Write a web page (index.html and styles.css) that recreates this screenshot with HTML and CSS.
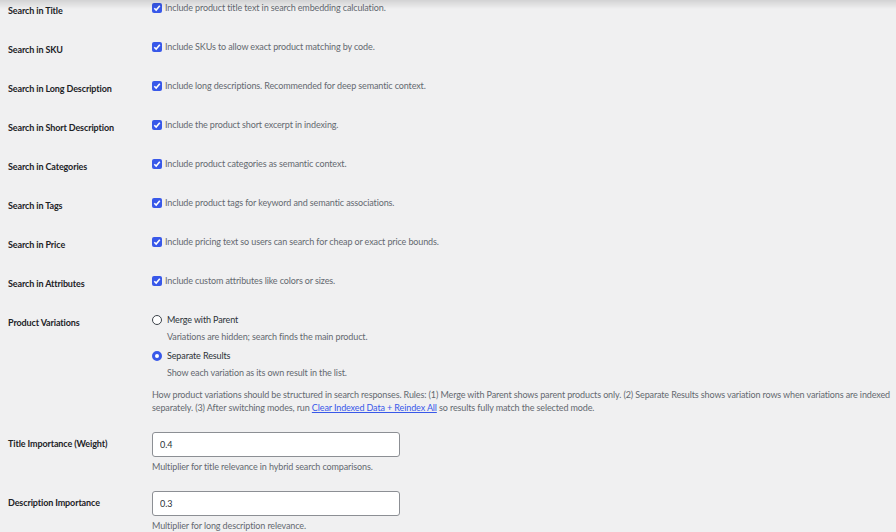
FILE: index.html
```html
<!DOCTYPE html>
<html lang="en">

<head>
    <meta charset="UTF-8">
    <meta name="viewport" content="width=device-width, initial-scale=1.0">
    <title>Search Settings</title>
    <link rel="stylesheet" href="styles.css">
</head>

<body>
    <div class="top-shadow"></div>

    <div class="settings">
        <div class="row">
            <div class="row-label">Search in Title</div>
            <div class="field">
                <label class="check"><span class="box"><svg viewBox="0 0 10 10"><polyline points="2.3,5.2 4.2,7.1 7.8,2.8" /></svg></span>Include product title text in search embedding calculation.</label>
            </div>
        </div>

        <div class="row">
            <div class="row-label">Search in SKU</div>
            <div class="field">
                <label class="check"><span class="box"><svg viewBox="0 0 10 10"><polyline points="2.3,5.2 4.2,7.1 7.8,2.8" /></svg></span>Include SKUs to allow exact product matching by code.</label>
            </div>
        </div>

        <div class="row">
            <div class="row-label">Search in Long Description</div>
            <div class="field">
                <label class="check"><span class="box"><svg viewBox="0 0 10 10"><polyline points="2.3,5.2 4.2,7.1 7.8,2.8" /></svg></span>Include long descriptions. Recommended for deep semantic context.</label>
            </div>
        </div>

        <div class="row">
            <div class="row-label">Search in Short Description</div>
            <div class="field">
                <label class="check"><span class="box"><svg viewBox="0 0 10 10"><polyline points="2.3,5.2 4.2,7.1 7.8,2.8" /></svg></span>Include the product short excerpt in indexing.</label>
            </div>
        </div>

        <div class="row">
            <div class="row-label">Search in Categories</div>
            <div class="field">
                <label class="check"><span class="box"><svg viewBox="0 0 10 10"><polyline points="2.3,5.2 4.2,7.1 7.8,2.8" /></svg></span>Include product categories as semantic context.</label>
            </div>
        </div>

        <div class="row">
            <div class="row-label">Search in Tags</div>
            <div class="field">
                <label class="check"><span class="box"><svg viewBox="0 0 10 10"><polyline points="2.3,5.2 4.2,7.1 7.8,2.8" /></svg></span>Include product tags for keyword and semantic associations.</label>
            </div>
        </div>

        <div class="row">
            <div class="row-label">Search in Price</div>
            <div class="field">
                <label class="check"><span class="box"><svg viewBox="0 0 10 10"><polyline points="2.3,5.2 4.2,7.1 7.8,2.8" /></svg></span>Include pricing text so users can search for cheap or exact price bounds.</label>
            </div>
        </div>

        <div class="row">
            <div class="row-label">Search in Attributes</div>
            <div class="field">
                <label class="check"><span class="box"><svg viewBox="0 0 10 10"><polyline points="2.3,5.2 4.2,7.1 7.8,2.8" /></svg></span>Include custom attributes like colors or sizes.</label>
            </div>
        </div>

        <div class="row">
            <div class="row-label">Product Variations</div>
            <div class="field field-tall">
                <label class="radio"><span class="dot"></span>Merge with Parent</label>
                <p class="option-desc">Variations are hidden; search finds the main product.</p>
                <label class="radio radio-next"><span class="dot dot-on"></span>Separate Results</label>
                <p class="option-desc">Show each variation as its own result in the list.</p>
                <p class="description description-long">How product variations should be structured in search responses. Rules: (1) Merge with Parent shows parent products only. (2) Separate Results shows variation rows when variations are indexed separately. (3) After switching modes, run <a href="#">Clear Indexed Data + Reindex All</a> so results fully match the selected mode.</p>
            </div>
        </div>

        <div class="row">
            <div class="row-label">Title Importance (Weight)</div>
            <div class="field field-input">
                <input class="text-input" type="text" value="0.4">
                <p class="description">Multiplier for title relevance in hybrid search comparisons.</p>
            </div>
        </div>

        <div class="row">
            <div class="row-label">Description Importance</div>
            <div class="field field-input">
                <input class="text-input" type="text" value="0.3">
                <p class="description">Multiplier for long description relevance.</p>
            </div>
        </div>
    </div>
</body>

</html>
```

FILE: styles.css
```css
* {
    margin: 0;
    padding: 0;
    box-sizing: border-box;
}

html,
body {
    background-color: #f0f0f1;
    overflow: hidden;
}

body {
    font-family: Lato, "Noto Sans", sans-serif;
    font-size: 9px;
    line-height: 13px;
    letter-spacing: -0.12px;
    color: #3c434a;
}

.top-shadow {
    position: fixed;
    top: 0;
    left: 0;
    right: 0;
    height: 9px;
    background: linear-gradient(to bottom, rgba(0, 0, 0, 0.12), rgba(0, 0, 0, 0));
    z-index: 2;
}

.settings {
    margin-top: -9px;
    padding-left: 8px;
}

.row {
    display: grid;
    grid-template-columns: 144px 1fr;
}

.row-label {
    padding-top: 13px;
    font-weight: 700;
    color: #1d2327;
}

.field {
    padding: 10px 4px 16px 0;
}

.field-tall {
    padding-bottom: 10px;
}

.field-input {
    padding: 8px 4px 10px 0;
}

.check {
    display: flex;
    align-items: center;
    color: #646970;
}

.box {
    width: 10px;
    height: 10px;
    margin-right: 3px;
    border-radius: 2px;
    background-color: #3858e9;
    display: flex;
}

.box svg {
    width: 10px;
    height: 10px;
    fill: none;
    stroke: white;
    stroke-width: 1.6;
}

.radio {
    display: flex;
    align-items: center;
    color: #2c3338;
}

.radio-next {
    margin-top: 6px;
}

.dot {
    width: 10px;
    height: 10px;
    margin-right: 5px;
    border-radius: 50%;
    border: 1px solid #3c434a;
    background-color: white;
}

.dot-on {
    border: 3px solid #3858e9;
}

.option-desc {
    margin-top: 4px;
    padding-left: 15px;
    color: #646970;
}

.description {
    margin-top: 3px;
    color: #646970;
}

.description-long {
    margin-top: 9px;
}

.description a {
    color: #3858e9;
}

.text-input {
    display: block;
    width: 248px;
    height: 25px;
    padding: 0 7px;
    border: 1px solid #8c8f94;
    border-radius: 3px;
    background-color: white;
    font-family: inherit;
    font-size: 9px;
    color: #2c3338;
}
```
